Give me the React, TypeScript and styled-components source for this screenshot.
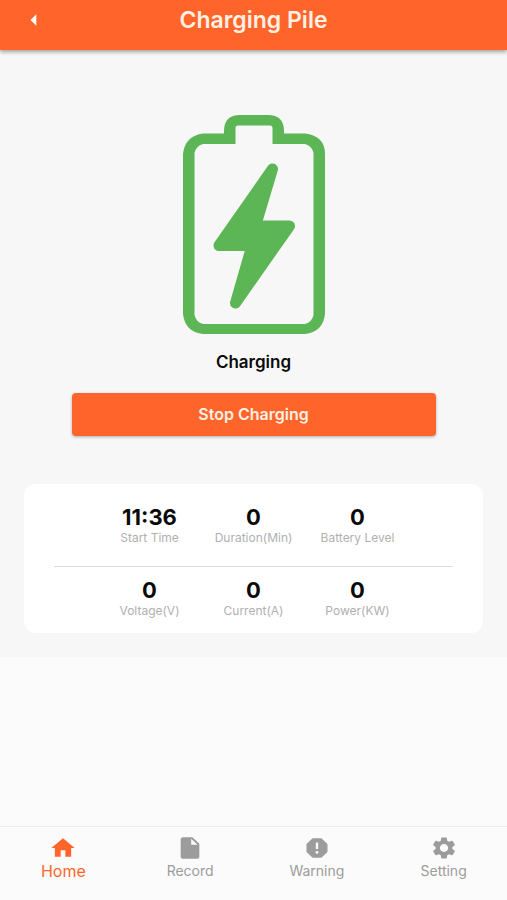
import React from "react";
import styled, { createGlobalStyle } from "styled-components";
import type { IconType } from "react-icons";
import { MdArrowLeft, MdHome, MdInsertDriveFile, MdReport, MdSettings } from "react-icons/md";

const ORANGE = "#ff652b";

const GlobalStyle = createGlobalStyle`
  *, *::before, *::after { box-sizing: border-box; }
  body {
    margin: 0;
    background: #fbfbfb;
    color: #0a0a0a;
    font-family: Inter, "Liberation Sans", sans-serif;
  }
  button { font-family: inherit; border: 0; cursor: pointer; }
`;

const Page = styled.div`
  min-height: 100vh;
  display: flex;
  flex-direction: column;
`;

const Header = styled.header`
  height: 50px;
  display: grid;
  grid-template-columns: 68px 1fr 68px;
  align-items: start;
  background: ${ORANGE};
  color: #fff0e2;
  box-shadow: 0 2px 4px rgba(0, 0, 0, 0.35);
  z-index: 1;
`;

const BackButton = styled.button`
  height: 40px;
  padding: 0;
  display: flex;
  align-items: center;
  justify-content: center;
  background: transparent;
  color: #fff;
`;

const Title = styled.h1`
  margin: 0;
  font-size: 23px;
  line-height: 40px;
  font-weight: 600;
  text-align: center;
`;

const Main = styled.main`
  display: flex;
  flex-direction: column;
  align-items: center;
  padding: 65px 24px 24px;
  background: #f7f7f7;
`;

const Status = styled.p`
  margin: 16px 0 19px;
  font-size: 17px;
  line-height: 24px;
  font-weight: 600;
`;

const StopButton = styled.button`
  width: calc(100% - 95px);
  height: 43px;
  margin-bottom: 48px;
  padding: 0 0 2px;
  border-radius: 4px;
  background: ${ORANGE};
  color: #fff0e2;
  font-size: 16px;
  font-weight: 600;
  box-shadow: 0 1px 3px rgba(0, 0, 0, 0.3);
`;

const Card = styled.section`
  width: 100%;
  padding: 20px 30px 14px;
  border-radius: 12px;
  background: #fff;
`;

const Readings = styled.dl`
  margin: 0;
  display: grid;
  grid-template-columns: repeat(3, 104px);
  justify-content: center;
`;

const Divider = styled.hr`
  height: 1px;
  margin: 20px 0 10px;
  border: 0;
  background: #dcdcdc;
`;

const Reading = styled.div`
  display: flex;
  flex-direction: column-reverse;
  text-align: center;
`;

const ReadingLabel = styled.dt`
  font-size: 12px;
  line-height: 16px;
  color: #b0b0b0;
`;

const ReadingValue = styled.dd`
  margin: 0;
  font-size: 22px;
  line-height: 26px;
  font-weight: 700;
`;

const TabBar = styled.nav`
  height: 74px;
  margin-top: auto;
  padding-top: 8px;
  display: grid;
  grid-template-columns: repeat(4, 1fr);
  align-items: start;
  border-top: 1px solid #ececec;
`;

const Tab = styled.a<{ $active: boolean }>`
  display: flex;
  flex-direction: column;
  align-items: center;
  color: ${(p) => (p.$active ? ORANGE : "#9c9c9c")};
  text-decoration: none;

  svg {
    width: 28px;
    height: 26px;
  }
`;

const TabLabel = styled.span<{ $active: boolean }>`
  font-size: ${(p) => (p.$active ? 16 : 14)}px;
  line-height: 20px;
  font-weight: 400;
`;

type Item = { label: string; value: string };

const session: Item[] = [
  { label: "Start Time", value: "11:36" },
  { label: "Duration(Min)", value: "0" },
  { label: "Battery Level", value: "0" },
];

const power: Item[] = [
  { label: "Voltage(V)", value: "0" },
  { label: "Current(A)", value: "0" },
  { label: "Power(KW)", value: "0" },
];

const tabs: { label: string; icon: IconType }[] = [
  { label: "Home", icon: MdHome },
  { label: "Record", icon: MdInsertDriveFile },
  { label: "Warning", icon: MdReport },
  { label: "Setting", icon: MdSettings },
];

function BatteryIcon() {
  return (
    <svg width="142" height="219" viewBox="0 0 142 219" fill="#5cb656" aria-hidden="true">
      <path
        fillRule="evenodd"
        d="M20 18.500H41V16Q41 0 57 0H85Q101 0 101 16V18.500H122Q142 21 142 39V199Q140 217 122 219H20Q2 217 0 199V39Q2 21 20 18.500ZM52.500 29H20Q13 31 11.500 38V200Q13 207 20 209H122Q129 207 130.500 200V38Q129 31 122 29H89.500V13Q89.500 10.500 87 10.500H55Q52.500 10.500 52.500 13Z"
      />
      <path
        d="M89.500 54L72.500 111H106.500L52.500 188L69 130.500H36Z"
        stroke="#5cb656"
        strokeWidth="11"
        strokeLinejoin="round"
      />
    </svg>
  );
}

function ReadingRow({ items }: { items: Item[] }) {
  return (
    <Readings>
      {items.map(({ label, value }) => (
        <Reading key={label}>
          <ReadingLabel>{label}</ReadingLabel>
          <ReadingValue>{value}</ReadingValue>
        </Reading>
      ))}
    </Readings>
  );
}

export default function App() {
  return (
    <>
      <GlobalStyle />
      <Page>
        <Header>
          <BackButton type="button" aria-label="Back">
            <MdArrowLeft size={28} />
          </BackButton>
          <Title>Charging Pile</Title>
        </Header>
        <Main>
          <BatteryIcon />
          <Status>Charging</Status>
          <StopButton type="button">Stop Charging</StopButton>
          <Card>
            <ReadingRow items={session} />
            <Divider />
            <ReadingRow items={power} />
          </Card>
        </Main>
        <TabBar>
          {tabs.map(({ label, icon: Icon }, i) => (
            <Tab key={label} href={`#${label.toLowerCase()}`} $active={i === 0} aria-current={i === 0 ? "page" : undefined}>
              <Icon preserveAspectRatio="none" />
              <TabLabel $active={i === 0}>{label}</TabLabel>
            </Tab>
          ))}
        </TabBar>
      </Page>
    </>
  );
}
